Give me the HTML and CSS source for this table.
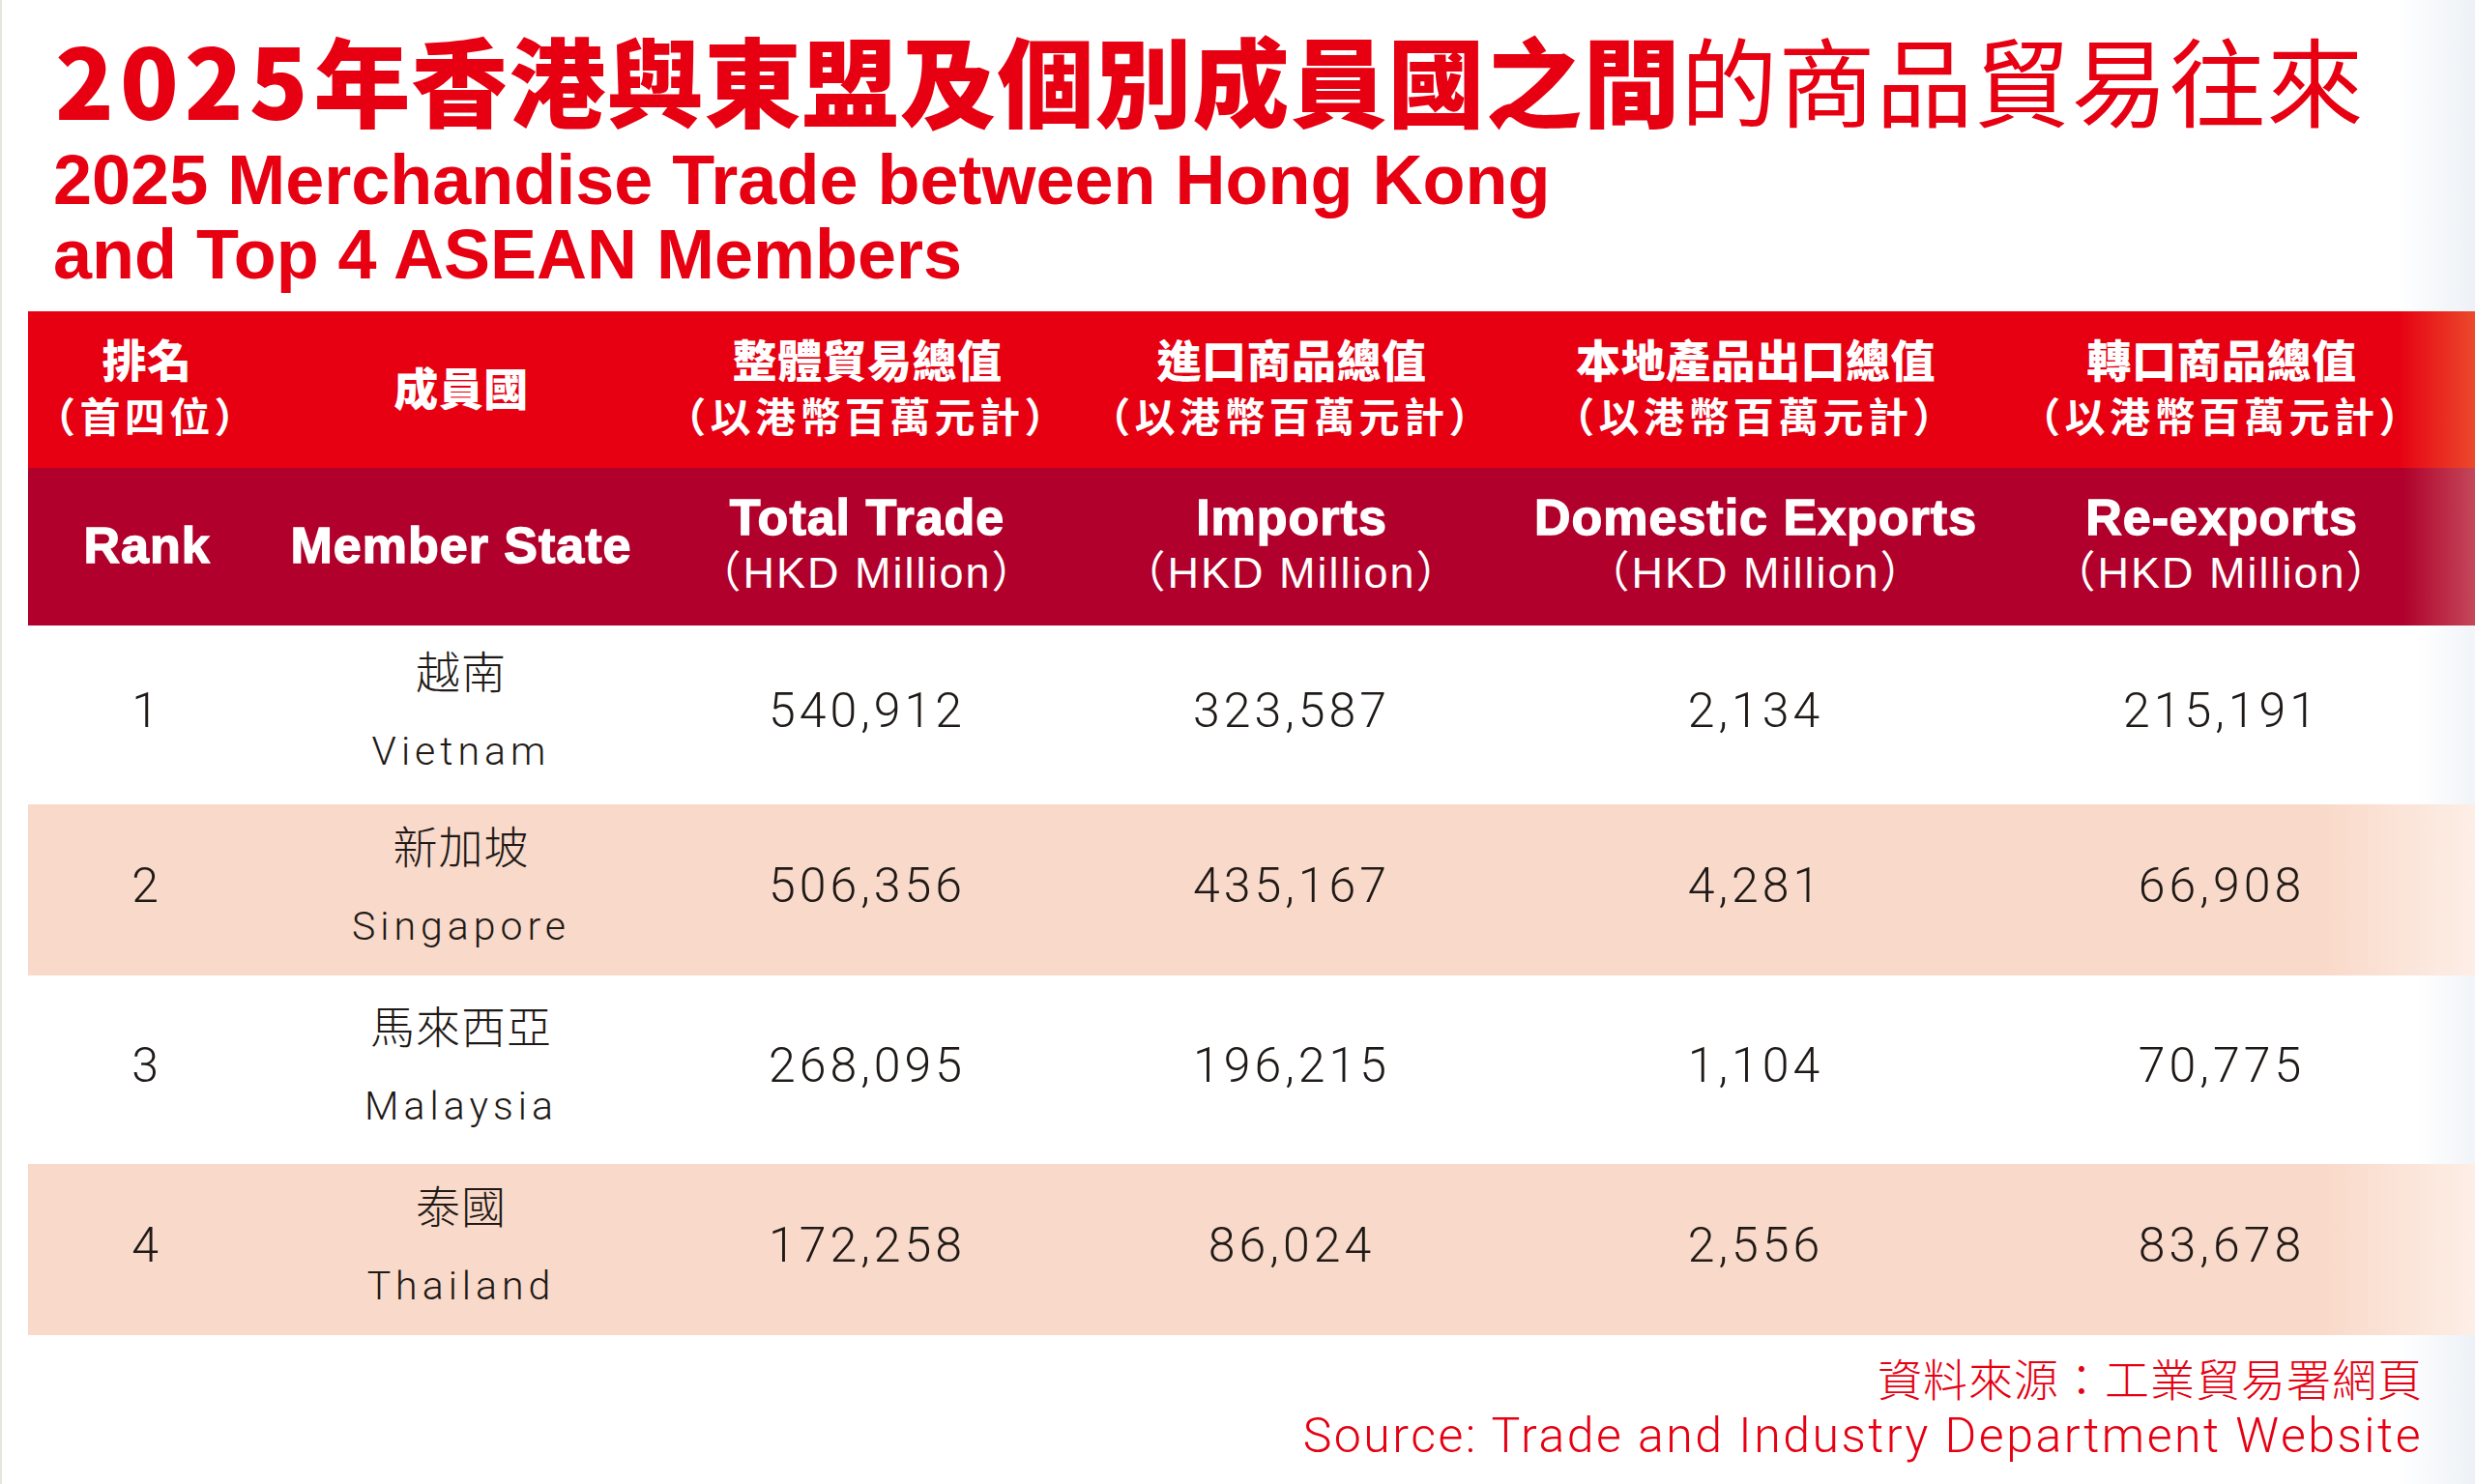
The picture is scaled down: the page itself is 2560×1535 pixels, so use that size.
FILE: index.html
```html
<!DOCTYPE html>
<html lang="zh-Hant">
<head>
<meta charset="utf-8">
<title>2025年香港與東盟及個別成員國之間的商品貿易往來</title>
<link rel="stylesheet" href="styles.css">
</head>
<body>
<div class="page">
  <header class="titles">
    <h1 class="title-zh"><span class="heavy"><span class="year">2025</span>年香港與東盟及個別成員國之間</span><span class="light">的商品貿易往來</span></h1>
    <h2 class="title-en">2025 Merchandise Trade between Hong Kong<br>and Top 4 ASEAN Members</h2>
  </header>

  <section class="table">
    <div class="row row-zh">
      <div class="cell"><span class="hz1">排名</span><span class="hz2">（首四位）</span></div>
      <div class="cell"><span class="hz1">成員國</span></div>
      <div class="cell"><span class="hz1">整體貿易總值</span><span class="hz2">（以港幣百萬元計）</span></div>
      <div class="cell"><span class="hz1">進口商品總值</span><span class="hz2">（以港幣百萬元計）</span></div>
      <div class="cell"><span class="hz1">本地產品出口總值</span><span class="hz2">（以港幣百萬元計）</span></div>
      <div class="cell"><span class="hz1">轉口商品總值</span><span class="hz2">（以港幣百萬元計）</span></div>
    </div>
    <div class="row row-en">
      <div class="cell"><span class="he1">Rank</span></div>
      <div class="cell"><span class="he1">Member State</span></div>
      <div class="cell"><span class="he1">Total Trade</span><span class="he2">（HKD Million）</span></div>
      <div class="cell"><span class="he1">Imports</span><span class="he2">（HKD Million）</span></div>
      <div class="cell"><span class="he1">Domestic Exports</span><span class="he2">（HKD Million）</span></div>
      <div class="cell"><span class="he1">Re-exports</span><span class="he2">（HKD Million）</span></div>
    </div>

    <div class="row row-body white r1">
      <div class="cell"><span class="num">1</span></div>
      <div class="cell member"><span class="zh-name">越南</span><span class="en-name">Vietnam</span></div>
      <div class="cell"><span class="num">540,912</span></div>
      <div class="cell"><span class="num">323,587</span></div>
      <div class="cell"><span class="num">2,134</span></div>
      <div class="cell"><span class="num">215,191</span></div>
    </div>
    <div class="row row-body peach r2">
      <div class="cell"><span class="num">2</span></div>
      <div class="cell member"><span class="zh-name">新加坡</span><span class="en-name">Singapore</span></div>
      <div class="cell"><span class="num">506,356</span></div>
      <div class="cell"><span class="num">435,167</span></div>
      <div class="cell"><span class="num">4,281</span></div>
      <div class="cell"><span class="num">66,908</span></div>
    </div>
    <div class="row row-body white r3">
      <div class="cell"><span class="num">3</span></div>
      <div class="cell member"><span class="zh-name">馬來西亞</span><span class="en-name">Malaysia</span></div>
      <div class="cell"><span class="num">268,095</span></div>
      <div class="cell"><span class="num">196,215</span></div>
      <div class="cell"><span class="num">1,104</span></div>
      <div class="cell"><span class="num">70,775</span></div>
    </div>
    <div class="row row-body peach r4">
      <div class="cell"><span class="num">4</span></div>
      <div class="cell member"><span class="zh-name">泰國</span><span class="en-name">Thailand</span></div>
      <div class="cell"><span class="num">172,258</span></div>
      <div class="cell"><span class="num">86,024</span></div>
      <div class="cell"><span class="num">2,556</span></div>
      <div class="cell"><span class="num">83,678</span></div>
    </div>
  </section>

  <footer class="source">
    <p class="source-zh">資料來源：工業貿易署網頁</p>
    <p class="source-en">Source: Trade and Industry Department Website</p>
  </footer>
</div>
</body>
</html>
```

FILE: styles.css
```css
html, body {
  margin: 0;
  padding: 0;
}

body {
  width: 2560px;
  height: 1535px;
  overflow: hidden;
  background: linear-gradient(90deg, #ffffff 0, #ffffff 2480px, #edf1f6 2560px);
  box-shadow: inset 2px 0 0 #e2e6de;
  font-family: "Roboto", "Noto Sans CJK TC", sans-serif;
  color: #1f1a17;
}

.page {
  padding-top: 31px;
}

/* ---------- titles ---------- */
.title-zh {
  margin: 0 0 0 57px;
  font-family: "Noto Sans CJK TC", sans-serif;
  font-size: 100px;
  line-height: 100px;
  color: #e60012;
  white-space: nowrap;
  font-weight: 400;
  letter-spacing: 1px;
}

.title-zh .heavy {
  font-weight: 900;
}

.title-zh .year {
  letter-spacing: 6px;
}

.title-zh .light {
  font-weight: 400;
}

.title-en {
  margin: 17px 0 0 55px;
  font-family: "Liberation Sans", Arial, sans-serif;
  font-weight: 700;
  font-size: 72px;
  line-height: 77px;
  color: #e60012;
  white-space: nowrap;
}

/* ---------- table ---------- */
.table {
  margin: 20px 0 0 29px;
}

.row {
  display: grid;
  grid-template-columns: 246px 404px 436px 442px 518px 446px;
  padding-right: 39px;
}

.cell {
  display: flex;
  flex-direction: column;
  align-items: center;
  justify-content: center;
  text-align: center;
  white-space: nowrap;
}

.row-zh {
  height: 162px;
  background: linear-gradient(90deg, #e60012 0, #e60012 calc(100% - 80px), #eb4a2c 100%);
  color: #ffffff;
}

.row-en {
  height: 163px;
  padding-bottom: 4px;
  box-sizing: border-box;
  background: linear-gradient(90deg, #b0002b 0, #b0002b calc(100% - 75px), #c3485a 100%);
  color: #ffffff;
}

/* Latin primary font keeps the line boxes compact; the CJK glyphs come from Noto Sans CJK */
.hz1 {
  font-family: "Liberation Sans", "Noto Sans CJK TC", sans-serif;
  font-weight: 900;
  font-size: 46px;
  line-height: 58px;
  letter-spacing: 0.5px;
}

.hz2 {
  font-family: "Liberation Sans", "Noto Sans CJK TC", sans-serif;
  font-weight: 700;
  font-size: 42px;
  line-height: 59px;
  letter-spacing: 4.4px;
}

.he1 {
  font-family: "Liberation Sans", Arial, sans-serif;
  font-weight: 700;
  font-size: 52px;
  line-height: 58px;
  letter-spacing: 1px;
  -webkit-text-stroke: 1.4px #ffffff;
}

.he2 {
  font-family: "Liberation Sans", "Noto Sans CJK TC", sans-serif;
  font-weight: 400;
  font-size: 45px;
  line-height: 58px;
  letter-spacing: 2px;
}

.row-body {
  padding-bottom: 10px;
  box-sizing: border-box;
}

.row-body.white {
  background: linear-gradient(90deg, #ffffff 0, #ffffff calc(100% - 60px), #f1f4f8 100%);
}

.row-body.peach {
  background: linear-gradient(90deg, #f9d9c9 0, #f9d9c9 calc(100% - 160px), #fdeee6 100%);
}

.r1 { height: 185px; }
.r2 { height: 177px; }
.r3 { height: 195px; }
.r4 { height: 177px; }

.num {
  font-family: "Roboto", sans-serif;
  font-weight: 300;
  font-size: 50px;
  line-height: 1;
  letter-spacing: 4px;
  color: #1f1a17;
}

.member {
  gap: 29px;
}

.zh-name {
  font-family: "Noto Sans CJK TC", sans-serif;
  font-weight: 300;
  font-size: 46px;
  line-height: 56px;
  letter-spacing: 1px;
  color: #1f1a17;
}

.en-name {
  font-family: "Roboto", sans-serif;
  font-weight: 300;
  font-size: 41px;
  line-height: 56px;
  letter-spacing: 5px;
  color: #1f1a17;
}

/* ---------- source ---------- */
.source {
  padding-right: 54px;
  text-align: right;
  color: #e60012;
}

.source p {
  margin: 0;
  white-space: nowrap;
}

.source-zh {
  margin-top: 15px !important;
  font-family: "Noto Sans CJK TC", sans-serif;
  font-weight: 300;
  font-size: 46px;
  line-height: 56px;
  letter-spacing: 1px;
}

.source-en {
  margin-top: 6px !important;
  font-family: "Roboto", sans-serif;
  font-weight: 300;
  font-size: 50px;
  line-height: 54px;
  letter-spacing: 2.5px;
}
```
